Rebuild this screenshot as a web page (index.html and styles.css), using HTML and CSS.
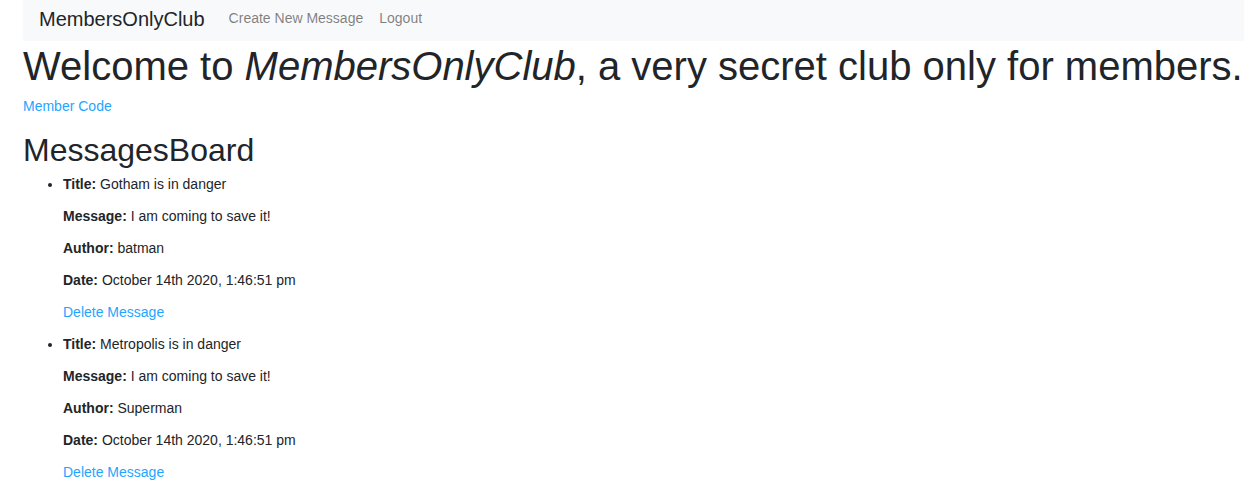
FILE: index.html
```html
<!DOCTYPE html>
<html>
<head>
<meta charset="utf-8">
<link rel="stylesheet" href="styles.css">
</head>
<body>
<nav class="navbar">
  <a class="brand" href="#">MembersOnlyClub</a>
  <a class="nav-link" href="#">Create New Message</a>
  <a class="nav-link" href="#">Logout</a>
</nav>
<h1 class="welcome">Welcome to <em>MembersOnlyClub</em>, a very secret club only for members.</h1>
<a class="link" href="#">Member Code</a>
<h2 class="board-title">MessagesBoard</h2>
<ul class="messages">
  <li>
    <p><b>Title:</b> Gotham is in danger</p>
    <p><b>Message:</b> I am coming to save it!</p>
    <p><b>Author:</b> batman</p>
    <p><b>Date:</b> October 14th 2020, 1:46:51 pm</p>
    <p><a class="link" href="#">Delete Message</a></p>
  </li>
  <li>
    <p><b>Title:</b> Metropolis is in danger</p>
    <p><b>Message:</b> I am coming to save it!</p>
    <p><b>Author:</b> Superman</p>
    <p><b>Date:</b> October 14th 2020, 1:46:51 pm</p>
    <p><a class="link" href="#">Delete Message</a></p>
  </li>
</ul>
</body>
</html>
```
FILE: styles.css
```css
html, body {
  margin: 0;
  padding: 0;
}
body {
  padding-left: 23px;
  font-family: "Liberation Sans", Arial, sans-serif;
  font-size: 14px;
  color: #212529;
  background: #fff;
  overflow: hidden;
}
.navbar {
  display: flex;
  align-items: center;
  height: 41px;
  background: #f8f9fa;
  padding-left: 16px;
  margin-right: -40px;
}
.brand {
  font-size: 20px;
  color: #212529;
  text-decoration: none;
  margin-right: 24px;
  padding-bottom: 2px;
}
.nav-link {
  font-size: 14px;
  color: rgba(0,0,0,0.5);
  text-decoration: none;
  margin-right: 16px;
  padding-bottom: 6px;
}
.welcome {
  font-size: 40px;
  font-weight: 400;
  line-height: 48px;
  margin: 1px 0 8px;
  white-space: nowrap;
}
.welcome em {
  font-style: italic;
}
.link {
  color: #1fa5ff;
  text-decoration: none;
}
.board-title {
  font-size: 32px;
  font-weight: 400;
  line-height: 38px;
  margin: 17px 0 5px;
}
.messages {
  margin: 0;
  padding-left: 40px;
}
.messages p {
  margin: 0 0 12px;
  line-height: 20px;
}
.messages b {
  font-weight: 700;
}
```
